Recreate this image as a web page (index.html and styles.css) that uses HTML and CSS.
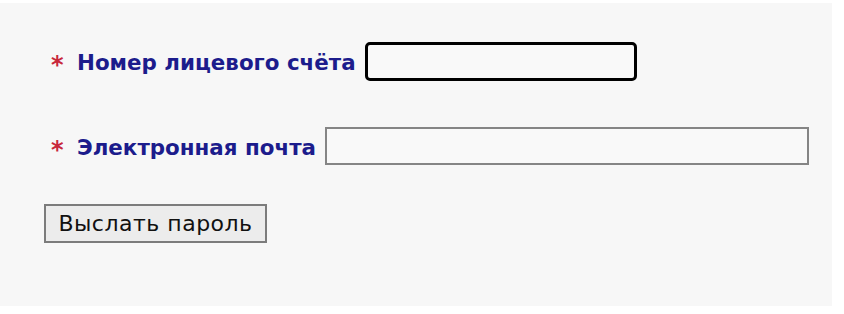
FILE: index.html
```html
<!DOCTYPE html>
<html lang="ru">
<head>
<meta charset="utf-8">
<link rel="stylesheet" href="styles.css">
</head>
<body>
<div class="page">
  <form class="form">
    <div class="row row-first">
      <span class="req">*</span>
      <label class="label" for="acc">Номер лицевого счёта</label>
      <input class="field field-focus" id="acc" type="text">
    </div>
    <div class="row row-second">
      <span class="req">*</span>
      <label class="label" for="mail">Электронная почта</label>
      <input class="field field-mail" id="mail" type="text">
    </div>
    <div class="actions">
      <button class="btn" type="button">Выслать пароль</button>
    </div>
  </form>
</div>
</body>
</html>
```

FILE: styles.css
```css
html, body {
  margin: 0;
  padding: 0;
  background: #ffffff;
}
.page {
  width: 832px;
  height: 303px;
  margin-top: 3px;
  background: #f7f7f7;
  box-sizing: border-box;
  padding: 39px 0 0 44px;
}
.form {
  display: flex;
  flex-direction: column;
  align-items: flex-start;
}
.row {
  display: flex;
  align-items: center;
  margin-left: 7px;
  font-family: "DejaVu Sans", Verdana, sans-serif;
  font-weight: bold;
  font-size: 21.4px;
}
.row-second {
  margin-top: 46px;
}
.req {
  color: #c8283c;
  width: 26px;
  font-size: 24px;
  font-weight: bold;
  line-height: 1;
  padding-top: 7px;
}
.label {
  color: #1c1c8c;
  margin-right: 9px;
  white-space: nowrap;
  padding-top: 2px;
}
.field {
  box-sizing: border-box;
  background: #f9f9f9;
  margin: 0;
  padding: 0 4px;
  font-size: 18px;
}
.field-focus {
  width: 272px;
  height: 39px;
  border: 3px solid #000000;
  border-radius: 5px;
  outline: none;
}
.field-mail {
  width: 484px;
  height: 38px;
  border: 2px solid #858585;
  border-radius: 0;
}
.actions {
  margin-top: 39px;
}
.btn {
  box-sizing: border-box;
  width: 223px;
  height: 39px;
  margin: 0;
  padding: 0;
  border: 2px solid #7c7c7c;
  border-radius: 0;
  background: #ececec;
  color: #111111;
  font-family: "DejaVu Sans", Verdana, sans-serif;
  font-size: 22px;
  letter-spacing: 0.5px;
  font-weight: normal;
}
```
